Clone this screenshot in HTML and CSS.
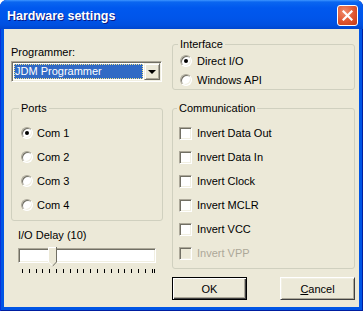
FILE: index.html
```html
<!DOCTYPE html>
<html lang="en">
  <head>
    <meta charset="UTF-8" />
    <title>Hardware settings</title>
    <link rel="stylesheet" href="styles.css">
  </head>
  <body>
    <div class="window">
      <div class="titlebar">
        <span class="title">Hardware settings</span>
        <span class="close">
          <svg width="11" height="11" viewBox="0 0 11 11">
            <path d="M1.5 1.5L9.5 9.5M9.5 1.5L1.5 9.5" stroke="#fff" stroke-width="2.2" stroke-linecap="square" />
          </svg>
        </span>
      </div>

      <div class="client">
        <!-- left column -->
        <div class="col-left">
          <div class="prog-label">Programmer:</div>
          <div class="combo">
            <span class="combo-value">JDM Programmer</span>
            <span class="combo-btn"><span class="arrow"></span></span>
          </div>

          <fieldset class="group ports">
            <legend>Ports</legend>
            <div class="opt"><span class="radio checked"></span>Com 1</div>
            <div class="opt"><span class="radio"></span>Com 2</div>
            <div class="opt"><span class="radio"></span>Com 3</div>
            <div class="opt"><span class="radio"></span>Com 4</div>
          </fieldset>

          <div class="delay-label">I/O Delay (10)</div>
          <div class="slider">
            <div class="track"></div>
            <svg class="thumb" width="9" height="20" viewBox="0 0 9 20">
              <path d="M0 0H9V15L4.5 19.5L0 15Z" fill="#ECE9D8" />
              <path d="M0.5 15V0.5H8" stroke="#fff" fill="none" />
              <path d="M8.5 0V15L4.5 19.2" stroke="#716F64" fill="none" />
              <path d="M0.8 15.2L4.3 18.7" stroke="#fff" fill="none" />
            </svg>
          </div>
          <div class="ticks">
            <span></span><span></span><span></span><span></span><span></span>
            <span></span><span></span><span></span><span></span><span></span>
            <span></span><span></span><span></span><span></span><span></span>
            <span></span><span></span><span></span><span></span><span></span>
          </div>
        </div>

        <!-- right column -->
        <div class="col-right">
          <fieldset class="group iface">
            <legend>Interface</legend>
            <div class="opt"><span class="radio checked"></span>Direct I/O</div>
            <div class="opt"><span class="radio"></span>Windows API</div>
          </fieldset>

          <fieldset class="group comm">
            <legend>Communication</legend>
            <div class="opt"><span class="check"></span>Invert Data Out</div>
            <div class="opt"><span class="check"></span>Invert Data In</div>
            <div class="opt"><span class="check"></span>Invert Clock</div>
            <div class="opt"><span class="check"></span>Invert MCLR</div>
            <div class="opt"><span class="check"></span>Invert VCC</div>
            <div class="opt disabled"><span class="check"></span>Invert VPP</div>
          </fieldset>

          <div class="buttons">
            <div class="btn default">OK</div>
            <div class="btn"><u>C</u>ancel</div>
          </div>
        </div>
      </div>
    </div>
  </body>
</html>
```

FILE: styles.css
```css
body {
  margin: 0;
  background-color: #ffffff;
  font-family: "Liberation Sans", Arial, sans-serif;
  font-size: 11px;
  color: #000;
}

.window {
  width: 363px;
  height: 311px;
  background-color: #0055e5;
  border-radius: 7px 7px 0 0;
  display: flex;
  flex-direction: column;
  box-sizing: border-box;
  padding: 0 4px 4px 4px;
  box-shadow: inset 1px 0 #0831d9, inset -1px 0 #001ea0, inset 0 -1px #001ea0;
}

.titlebar {
  height: 29px;
  margin: 0 -4px;
  padding: 0 5px 0 7px;
  border-radius: 7px 7px 0 0;
  background: linear-gradient(#3d95ff 0, #0a66f0 2px, #0058ee 8px, #0055ea 18px, #0050e0 25px, #0046cf 29px);
  display: flex;
  align-items: center;
  justify-content: space-between;
}

.title {
  color: #fff;
  font-weight: bold;
  font-size: 12.5px;
  text-shadow: 1px 1px #0a1883;
  padding-top: 2px;
}

.close {
  width: 19px;
  height: 19px;
  border: 1px solid #fff;
  border-radius: 3px;
  background: radial-gradient(circle at 35% 30%, #f08c6c 0, #e0552f 55%, #c43a16 100%);
  display: flex;
  align-items: center;
  justify-content: center;
  margin-top: 1px;
}

.client {
  flex: 1;
  background-color: #ece9d8;
  display: flex;
  padding-left: 7px;
  gap: 9px;
}

.col-left {
  width: 152px;
  display: flex;
  flex-direction: column;
}

.col-right {
  width: 183px;
  display: flex;
  flex-direction: column;
}

.prog-label {
  line-height: 13px;
  margin-top: 17px;
}

.combo {
  margin-top: 2px;
  width: 151px;
  height: 21px;
  box-sizing: border-box;
  background-color: #fff;
  border-top: 1px solid #aca899;
  border-left: 1px solid #aca899;
  border-right: 1px solid #fff;
  border-bottom: 1px solid #fff;
  box-shadow: inset 1px 1px #716f64, inset -1px -1px #f1efe2;
  padding: 1px;
  display: flex;
  gap: 1px;
}

.combo-value {
  flex: 1;
  margin: 1px 0 1px 1px;
  background-color: #316ac5;
  color: #fff;
  line-height: 15px;
  padding-left: 1px;
  outline: 1px dotted #f4e58a;
  outline-offset: -1px;
}

.combo-btn {
  width: 16px;
  box-sizing: border-box;
  background-color: #ece9d8;
  border-top: 1px solid #f1efe2;
  border-left: 1px solid #f1efe2;
  border-right: 1px solid #716f64;
  border-bottom: 1px solid #716f64;
  box-shadow: inset 1px 1px #fff, inset -1px -1px #aca899;
  display: flex;
  align-items: center;
  justify-content: center;
}

.arrow {
  width: 0;
  height: 0;
  border-left: 4px solid transparent;
  border-right: 4px solid transparent;
  border-top: 4px solid #000;
}

.group {
  margin: 0;
  border: 1px solid #d0d0bf;
  border-radius: 3px;
  min-width: 0;
}

.group legend {
  padding: 0 2px;
  margin-left: -2px;
  line-height: 13px;
}

.ports {
  margin-top: 20px;
  padding: 6px 0 3px 9px;
}

.iface {
  margin-top: 9px;
  padding: 0 0 0 7px;
}

.comm {
  margin-top: 12px;
  padding: 6px 0 3px 6px;
}

.opt {
  display: flex;
  align-items: center;
  height: 24px;
  gap: 4px;
}

.iface .opt {
  height: 19px;
  gap: 5px;
}

.comm .opt {
  gap: 5px;
}

.radio {
  width: 12px;
  height: 12px;
  box-sizing: border-box;
  border-radius: 50%;
  background-color: #fff;
  border-top: 1px solid #aca899;
  border-left: 1px solid #aca899;
  border-right: 1px solid #fff;
  border-bottom: 1px solid #fff;
  box-shadow: inset 1px 1px #716f64, inset -1px -1px #f1efe2;
  display: flex;
  align-items: center;
  justify-content: center;
}

.radio.checked::after {
  content: "";
  width: 4px;
  height: 4px;
  border-radius: 50%;
  background-color: #000;
}

.check {
  width: 13px;
  height: 13px;
  box-sizing: border-box;
  background-color: #fff;
  border-top: 1px solid #aca899;
  border-left: 1px solid #aca899;
  border-right: 1px solid #fff;
  border-bottom: 1px solid #fff;
  box-shadow: inset 1px 1px #716f64, inset -1px -1px #f1efe2;
}

.disabled {
  color: #aca899;
}

.disabled .check {
  background-color: #ece9d8;
}

.delay-label {
  margin-top: 8px;
  padding-left: 7px;
  line-height: 13px;
}

.slider {
  position: relative;
  margin: 6px 0 0 7px;
  width: 138px;
  height: 15px;
}

.track {
  height: 15px;
  box-sizing: border-box;
  background-color: #fff;
  border-top: 1px solid #aca899;
  border-left: 1px solid #aca899;
  border-right: 1px solid #fff;
  border-bottom: 1px solid #fff;
  box-shadow: inset 1px 1px #716f64, inset -1px -1px #f1efe2;
}

.thumb {
  position: absolute;
  left: 30px;
  top: -1px;
}

.ticks {
  margin: 6px 0 0 11px;
  width: 131px;
  height: 4px;
  display: flex;
  justify-content: space-between;
}

.ticks span {
  width: 1px;
  height: 4px;
  background-color: #000;
}

.ticks span:last-child {
  box-shadow: 2px 0 #000;
}

.buttons {
  margin-top: 8px;
  display: flex;
  justify-content: space-between;
}

.btn {
  width: 75px;
  height: 23px;
  box-sizing: border-box;
  display: flex;
  align-items: center;
  justify-content: center;
  background-color: #ece9d8;
  border-top: 1px solid #fff;
  border-left: 1px solid #fff;
  border-right: 1px solid #404040;
  border-bottom: 1px solid #404040;
  box-shadow: inset 1px 1px #f1efe2, inset -1px -1px #aca899;
}

.btn.default {
  border: 1px solid #000;
  box-shadow: inset 1px 1px #fff, inset -1px -1px #404040, inset -2px -2px #aca899;
}
```
